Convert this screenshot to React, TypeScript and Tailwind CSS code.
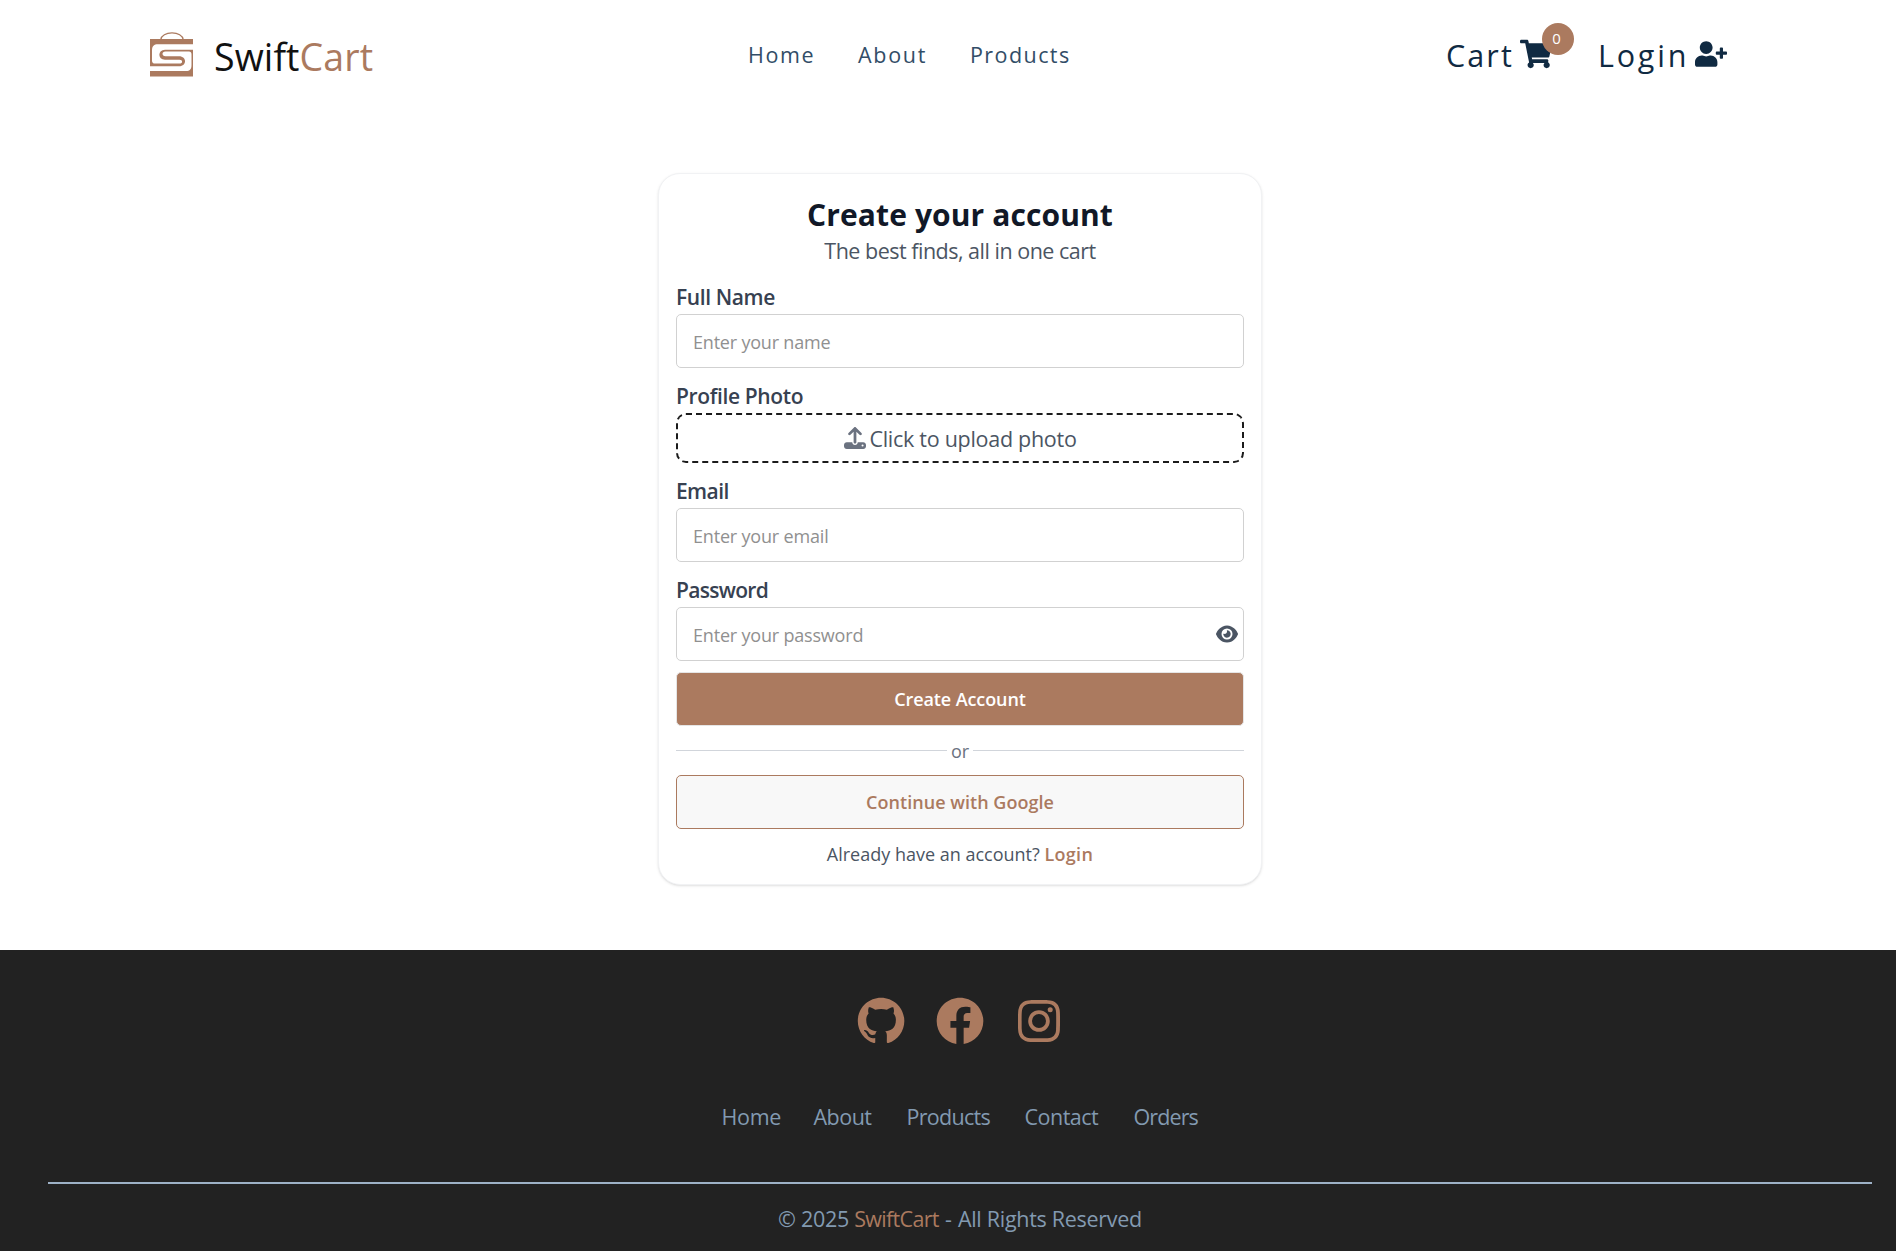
import type { ReactNode } from "react";
import { FaShoppingCart, FaUserPlus } from "react-icons/fa";
import { FaEye, FaUpload } from "react-icons/fa6";
import { BiLogoFacebookCircle, BiLogoGithub, BiLogoInstagram } from "react-icons/bi";

function Logo() {
  return (
    <svg width="43" height="45" viewBox="0 0 43 45" fill="none">
      <path d="M10.800 7.500C11.300 3.500 16 .9 22 .9s10.700 2.600 11.200 6.600" stroke="#ab7a5f" strokeWidth="1.300" />
      <rect y="7" width="43" height="37.500" fill="#ab7a5f" />
      <path
        fill="#fff"
        d="M43 12.200H8C4 12.200 2 14 2 18V28.500C2 30.700 3 31.600 5 31.600H29.500C33 31.600 33 27.700 29.500 27.700H15C7.500 27.700 7.500 17.700 15 17.700H43Z"
      />
      <path
        fill="#fff"
        d="M0 39H36C40 39 41.500 37 41.500 33V22.500C41.500 20.500 40.500 19.600 39 19.600H15.500C11.500 19.600 11.500 24.300 15.500 24.300H29C37 24.300 37 34.300 29 34.300H0Z"
      />
    </svg>
  );
}

function Header() {
  return (
    <header className="flex h-[108px] items-center pl-[150px]">
      <a className="flex w-[598px] items-center">
        <Logo />
        <span className="ml-[21px] pt-[5px] text-[37.5px] leading-[45px] tracking-[0.1px] text-[#111]">
          Swift<span className="text-[#ab7a5f]">Cart</span>
        </span>
      </a>
      <nav className="flex pt-0.5 text-[21.5px] leading-7 text-[#324d67]">
        <a className="w-[110px] tracking-[1.6px]">Home</a>
        <a className="w-[112px] tracking-[1.7px]">About</a>
        <a className="w-[121px] tracking-[1.43px]">Products</a>
      </nav>
      <div className="ml-[354px] flex items-center text-[30.5px] leading-10 text-[#102a42]">
        <a className="flex w-[153px] items-center">
          <span className="w-[75px] pt-px pl-px tracking-[2.1px]">Cart</span>
          <span className="relative">
            <FaShoppingCart className="size-8" />
            <span className="absolute -top-[15px] left-[22px] flex size-8 items-center justify-center rounded-full bg-[#ab7a5f] pr-[3px] pb-0.5 text-[15px] leading-none text-white">
              0
            </span>
          </span>
        </a>
        <a className="flex items-center">
          <span className="w-[97px] pt-px tracking-[2.8px]">Login</span>
          <FaUserPlus className="size-8" />
        </a>
      </div>
    </header>
  );
}

function Label({ children, className }: { children: ReactNode; className: string }) {
  return <label className={`block text-[21px] leading-7 font-semibold text-[#374151] ${className}`}>{children}</label>;
}

const inputClass =
  "block h-[54px] w-full rounded-[5px] border border-[#d1d1d1] bg-white px-4 pt-0.5 text-[18px] placeholder:text-[#909090]";

function SignUpCard() {
  return (
    <main className="mt-[65px] ml-[658px] h-[712px] w-[604px] rounded-[22px] border border-[#f1f2f4] bg-white px-[17px] pt-[22px] shadow-sm">
      <h1 className="text-center text-[30px] leading-[38px] font-bold tracking-[0.11px] text-[#111827]">
        Create your account
      </h1>
      <p className="mt-[3px] text-center text-[21.5px] leading-7 tracking-[-0.5px] text-[#4b5563]">
        The best finds, all in one cart
      </p>

      <Label className="mt-[18px] tracking-[-0.4px]">Full Name</Label>
      <input className={`mt-[3px] tracking-[-0.2px] ${inputClass}`} placeholder="Enter your name" />

      <Label className="mt-[14px] tracking-[-0.36px]">Profile Photo</Label>
      <button className="mt-[3px] flex h-[50px] w-full items-center justify-center gap-[3px] rounded-[10px] border-2 border-dashed border-[#1b1b1b] pl-px text-[21.5px] text-[#4b5563]">
        <FaUpload className="size-[22px] text-[#6b7280]" />
        <span className="pt-[3px] tracking-[-0.28px]">Click to upload photo</span>
      </button>

      <Label className="mt-[14px] tracking-[-0.6px]">Email</Label>
      <input className={`mt-[3px] tracking-[-0.18px] ${inputClass}`} placeholder="Enter your email" />

      <Label className="mt-[14px] tracking-[-0.7px]">Password</Label>
      <div className="relative mt-[3px]">
        <input className={`tracking-[-0.19px] ${inputClass}`} placeholder="Enter your password" />
        <FaEye className="absolute top-4 right-1.5 size-[22px] text-[#4b5563]" />
      </div>

      <button className="mt-[11px] h-[54px] w-full rounded-[5px] border border-[#e5e5e5] bg-[#ab7a5f] text-[18px] font-semibold tracking-[-0.1px] text-white">
        Create Account
      </button>
      <div className="mt-[10px] flex h-7 items-center text-[18px] text-[#6b7280]">
        <span className="h-px flex-1 bg-[#d1d5db]" />
        <span className="w-[26px] pt-0.5 text-center">or</span>
        <span className="h-px flex-1 bg-[#d1d5db]" />
      </div>
      <button className="mt-[11px] h-[54px] w-full rounded-[5px] border border-[#ab7a5f] bg-[#f8f8f8] text-[18px] font-semibold tracking-[0.03px] text-[#ab7a5f]">
        Continue with Google
      </button>
      <p className="mt-[11px] text-center text-[18px] leading-7 text-[#4b5563]">
        Already have an account? <a className="font-semibold tracking-[0.3px] text-[#ab7a5f]">Login</a>
      </p>
    </main>
  );
}

function Footer() {
  return (
    <footer className="mt-[65px] h-[301px] bg-[#222] pt-[43px] pr-6 pl-12 text-[21.5px] leading-7 text-[#829ab1]">
      <div className="flex justify-center gap-[23px] text-[#ab7a5f]">
        <BiLogoGithub className="size-14" />
        <BiLogoFacebookCircle className="size-14" />
        <BiLogoInstagram className="size-14" />
      </div>
      <nav className="mt-[54px] flex justify-center">
        <a className="w-[92px] tracking-[-0.33px]">Home</a>
        <a className="w-[93px] tracking-[-0.5px]">About</a>
        <a className="w-[118px] tracking-[-0.71px]">Products</a>
        <a className="w-[109px] tracking-[-0.51px]">Contact</a>
        <a className="w-[65px] tracking-[-0.9px]">Orders</a>
      </nav>
      <hr className="mt-[51px] border-t-2 border-[#9eb2c7]" />
      <p className="mt-[21px] text-center tracking-[-0.29px]">
        © 2025 <span className="tracking-[-0.7px] text-[#ab7a5f]">SwiftCart</span>
        <span className="ml-px"> - </span>
        <span className="ml-px">All Rights Reserved</span>
      </p>
    </footer>
  );
}

export default function App() {
  return (
    <div className="h-[1251px] overflow-hidden bg-white font-['Open_Sans','Noto_Sans',sans-serif]">
      <Header />
      <SignUpCard />
      <Footer />
    </div>
  );
}
